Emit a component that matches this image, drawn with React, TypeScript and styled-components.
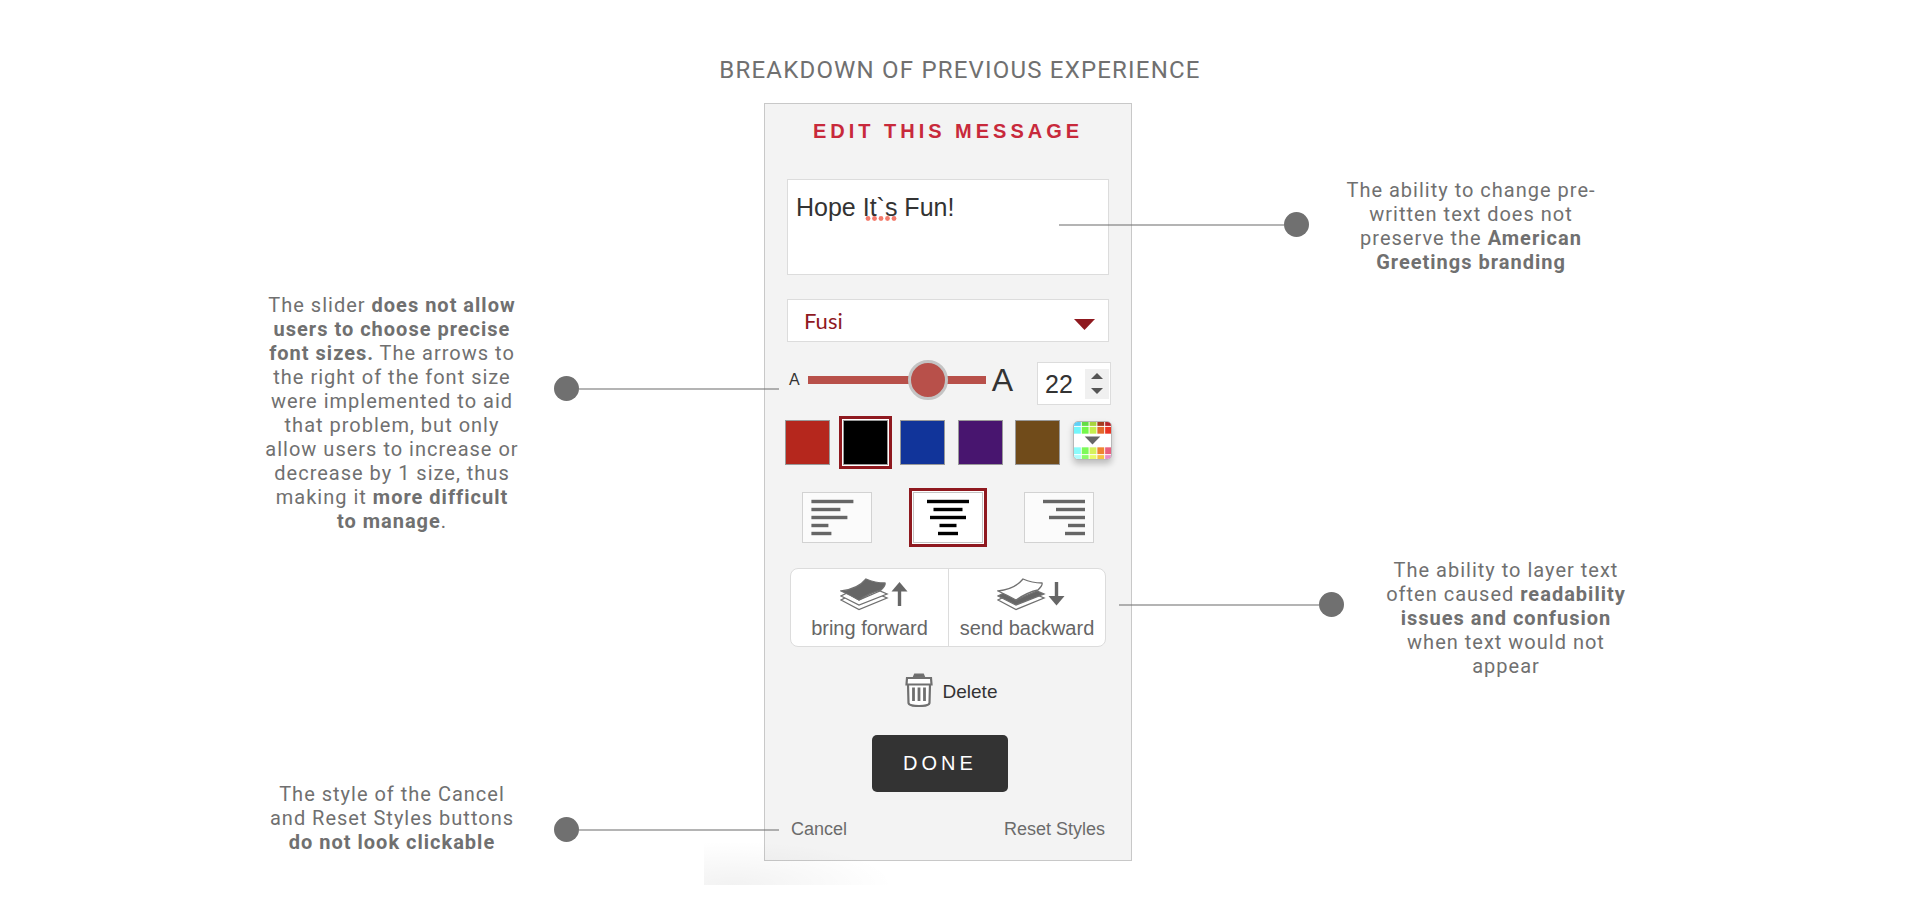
import React from "react";
import styled, { createGlobalStyle, css } from "styled-components";

const Global = createGlobalStyle`
  *, *::before, *::after { box-sizing: border-box; }
  body { margin: 0; background: #fff; color: #707070; font-family: Roboto, sans-serif; }
  button, input, select, textarea { font: inherit; color: inherit; margin: 0; padding: 0; border: 0; border-radius: 0; }
  button { cursor: pointer; background: none; }
`;

const RED = "#8f191f";
const INK = "#333";

const Page = styled.main`
  display: flex;
  flex-direction: column;
  align-items: center;
  padding: 54px 0 38px;
`;
const Title = styled.h1`
  margin: 0 0 17px;
  font-size: 24px;
  line-height: 32px;
  font-weight: 400;
  letter-spacing: 0.05em;
`;
const Stage = styled.div`
  display: grid;
  grid-template-columns: 500px 368px 524px;
  justify-content: center;
`;
const Column = styled.div<{ $top: number; $gap: number; $side: "left" | "right" }>`
  display: flex;
  flex-direction: column;
  align-items: ${(p) => (p.$side === "left" ? "flex-end" : "flex-start")};
  gap: ${(p) => p.$gap}px;
  padding-top: ${(p) => p.$top}px;
`;
const CalloutRow = styled.div<{ $side: "left" | "right"; $overlap: number }>`
  position: relative;
  z-index: 2;
  display: flex;
  flex-direction: ${(p) => (p.$side === "left" ? "row" : "row-reverse")};
  gap: 34px;
  ${(p) => (p.$side === "left" ? "margin-right" : "margin-left")}: -${(p) => p.$overlap}px;
  pointer-events: none;
`;
const Note = styled.p`
  width: 256px;
  margin: 0;
  font-size: 20px;
  line-height: 24px;
  letter-spacing: 0.05em;
  text-align: center;
`;
const Connector = styled.div<{ $side: "left" | "right"; $length: number; $drop: number }>`
  display: flex;
  flex-direction: ${(p) => (p.$side === "left" ? "row" : "row-reverse")};
  align-items: center;
  width: ${(p) => p.$length}px;
  height: 25px;
  margin-top: ${(p) => p.$drop}px;
`;
const Dot = styled.span`
  width: 25px;
  height: 25px;
  border-radius: 50%;
  background: #707070;
`;
const Line = styled.span`
  flex: 1;
  height: 2px;
  background: rgba(112, 112, 112, 0.52);
`;

type CalloutProps = {
  side: "left" | "right";
  overlap: number;
  length: number;
  drop: number;
  children: React.ReactNode;
};
const Callout = ({ side, overlap, length, drop, children }: CalloutProps) => (
  <CalloutRow $side={side} $overlap={overlap}>
    <Note>{children}</Note>
    <Connector $side={side} $length={length} $drop={drop}>
      <Dot />
      <Line />
    </Connector>
  </CalloutRow>
);

const Panel = styled.form`
  position: relative;
  display: flex;
  flex-direction: column;
  padding: 11px 20px 19px;
  border: 1px solid #c8c8c8;
  background: #f3f3f3;
  font-family: "Liberation Sans", Arial, sans-serif;
  color: ${INK};
`;
const Smudge = styled.div`
  position: absolute;
  left: -61px;
  bottom: -25px;
  width: 200px;
  height: 44px;
  background: radial-gradient(ellipse 160px 44px at 30px 44px, rgba(0, 0, 0, 0.05), transparent);
  pointer-events: none;
`;
const PanelTitle = styled.h2`
  margin: 0;
  font-size: 20px;
  line-height: 32px;
  letter-spacing: 4px;
  font-weight: 700;
  text-align: center;
  color: #c8293b;
`;
const MessageWrap = styled.label`
  position: relative;
  display: flex;
  margin: 32px 2px 0;
`;
const Message = styled.textarea`
  width: 100%;
  height: 96px;
  padding: 12px 8px;
  border: 1px solid #dcdcdc;
  background: #fff;
  font-size: 25px;
  line-height: 30px;
  resize: none;
  outline: none;
`;
const SpellMark = styled.svg`
  position: absolute;
  left: 78px;
  top: 37px;
`;
const SelectWrap = styled.label`
  position: relative;
  display: flex;
  margin: 24px 2px 0;
`;
const FontSelect = styled.select`
  width: 100%;
  height: 43px;
  padding: 0 16px;
  border: 1px solid #dcdcdc;
  background: #fff;
  appearance: none;
  font-family: Lato, sans-serif;
  font-size: 22px;
  color: ${RED};
`;
const SelectCaret = styled.svg`
  position: absolute;
  right: 14px;
  top: 20px;
  pointer-events: none;
`;
const SizeRow = styled.div`
  display: flex;
  align-items: center;
  height: 43px;
  margin: 20px 0 0 4px;
`;
const Letter = styled.span<{ $big?: boolean }>`
  padding-bottom: 8px;
  font-size: ${(p) => (p.$big ? 32 : 16)}px;
  line-height: 32px;
`;
const Slider = styled.input`
  flex: 1;
  min-width: 0;
  height: 40px;
  margin: 0 6px 7px 8px;
  appearance: none;
  background: linear-gradient(#b8504a, #b8504a) center / 100% 8px no-repeat;
  &::-webkit-slider-thumb {
    appearance: none;
    width: 40px;
    height: 40px;
    border: 3px solid #c4c4c4;
    border-radius: 50%;
    background: #b8504a;
  }
`;
const NumberBox = styled.div`
  display: flex;
  align-items: center;
  width: 74px;
  height: 43px;
  margin-left: 24px;
  padding: 0 1px 0 7px;
  border: 1px solid #dcdcdc;
  background: #fff;
`;
const NumberInput = styled.input`
  flex: 1;
  min-width: 0;
  background: none;
  font-size: 25px;
  line-height: 30px;
`;
const Spinner = styled.div`
  display: flex;
  flex-direction: column;
  width: 24px;
  background: #f0f0f0;
`;
const SpinButton = styled.button`
  display: flex;
  align-items: center;
  justify-content: center;
  height: 15px;
`;
const ring = css`
  outline: 3px solid ${RED};
  outline-offset: 1px;
  box-shadow: 0 0 0 1px #fff;
`;
const SwatchRow = styled.div`
  display: flex;
  justify-content: space-between;
  margin: 15px -1px 0 0;
`;
const Swatch = styled.button<{ $color: string; $on?: boolean }>`
  width: 45px;
  height: 45px;
  border: 1px solid #999;
  background: ${(p) => p.$color};
  ${(p) => p.$on && ring}
`;
const PickerButton = styled.button`
  display: flex;
  width: 39px;
  height: 39px;
  margin-top: 1px;
  overflow: hidden;
  border: 1px solid #b8b8b8;
  border-radius: 5px;
  background: #fff;
  box-shadow: 0 4px 6px rgba(0, 0, 0, 0.22);
`;
const AlignRow = styled.div`
  display: flex;
  justify-content: space-between;
  margin: 27px 17px 0;
`;
const AlignButton = styled.button<{ $on?: boolean }>`
  display: flex;
  width: 70px;
  height: 51px;
  border: 1px solid ${(p) => (p.$on ? "#c4c4c4" : "#d2d2d2")};
  background: ${(p) => (p.$on ? "#fff" : "#fbfbfb")};
  color: ${(p) => (p.$on ? "#000" : "#666")};
  ${(p) => p.$on && ring}
`;
const LayerGroup = styled.div`
  display: grid;
  grid-template-columns: 157px 1fr;
  height: 79px;
  margin: 25px 5px 0;
  border: 1px solid #dcdcdc;
  border-radius: 8px;
  background: #fff;
`;
const LayerButton = styled.button`
  display: flex;
  flex-direction: column;
  align-items: center;
  padding-top: 9px;
  font-size: 20px;
  line-height: 24px;
  white-space: nowrap;
  color: #666;
  & + & {
    border-left: 1px solid #dcdcdc;
  }
  svg {
    margin: 0 0 4px 8px;
  }
`;
const DeleteButton = styled.button`
  display: flex;
  align-self: center;
  align-items: center;
  gap: 10px;
  margin: 26px 0 0 6px;
  font-size: 19px;
  line-height: 24px;
  svg {
    margin-bottom: 4px;
  }
`;
const DoneButton = styled.button`
  align-self: center;
  width: 136px;
  height: 57px;
  margin: 24px 16px 0 0;
  border-radius: 5px;
  background: ${INK};
  color: #fff;
  font-size: 20px;
  letter-spacing: 4px;
`;
const Footer = styled.div`
  display: flex;
  justify-content: space-between;
  margin: 25px 6px 0;
`;
const QuietButton = styled.button`
  font-size: 18px;
  line-height: 24px;
  color: #6b6b6b;
`;

const swatches = [
  { name: "Red", color: "#b5271d" },
  { name: "Black", color: "#000", on: true },
  { name: "Blue", color: "#11349a" },
  { name: "Purple", color: "#48156f" },
  { name: "Brown", color: "#704b1a" },
];

const lineWidths = [42, 29, 36, 17, 20];
type Align = "left" | "center" | "right";
const lineStart = (align: Align, w: number) =>
  align === "left" ? 8.4 : align === "right" ? 60 - w : 34 - w / 2;
const AlignIcon = ({ align }: { align: Align }) => (
  <svg width="68" height="49" viewBox="0 0 68 49" fill="currentColor">
    {lineWidths.map((w, i) => (
      <rect key={i} x={lineStart(align, w)} y={6.8 + i * 8} width={w} height="3.4" />
    ))}
  </svg>
);

const LayersIcon = ({ down }: { down?: boolean }) => (
  <svg width="68" height="34" viewBox="0 0 68 34" fill="#fff" stroke="#707070" strokeWidth="1.3">
    <path d="M1 22 19 31.500 47 20 40 17 19 25 7 19Z" />
    <path d="M1 18 19 27 47 16 40 13 19 22 7 15Z" fill={down ? "#666" : "#fff"} />
    <path d="M1 13Q18 11 26 1Q35 5 45 5Q46 7 41 12Q31 14 19 22Q10 17 1 13Z" fill={down ? "#fff" : "#666"} />
    <path d={down ? "M59.500 4V21" : "M59.500 11V28"} stroke="#666" strokeWidth="3.4" />
    <path d={down ? "M51.500 18H67.500L59.500 27.500Z" : "M51.500 13.500H67.500L59.500 4Z"} fill="#666" stroke="none" />
  </svg>
);

const TrashIcon = () => (
  <svg width="28" height="34" viewBox="0 0 28 34" fill="#fff" stroke="#707070" strokeWidth="2.2">
    <path d="M3 11 3.500 30Q4 33 14 33T24.500 30L25 11Z" />
    <path d="M9 4 10 1.500H18L19 4Z" fill="#666" />
    <path d="M2 5H26L26.500 11.500H1.500Z" />
    <path d="M8.500 14.500V28M14 14.500V28M19.500 14.500V28" strokeWidth="2.8" />
  </svg>
);

const pickerRows = [
  { y: 0, h: 4, colors: ["#5fd0f5", "#64dd45", "#a8d43c", "#a63a1e", "#b5232a"] },
  { y: 5, h: 7, colors: ["#72f6fb", "#74f84a", "#c5ee4d", "#e2682b", "#ea3323"] },
  { y: 26, h: 7, colors: ["#8bfbfb", "#7dfa5a", "#d5f25c", "#ef8532", "#ea5f7e"] },
  { y: 34, h: 4, colors: ["#b0fbfb", "#8cfb6a", "#e8fb6a", "#f5c242", "#e88cc8"] },
];
const pickerCols = [
  [0, 7],
  [8, 7],
  [16, 7],
  [24, 7],
  [32, 6],
];
const PickerIcon = () => (
  <svg width="37" height="37" viewBox="0 0 38 38">
    {pickerRows.map((row) =>
      row.colors.map((c, i) => (
        <rect key={c} x={pickerCols[i][0]} y={row.y} width={pickerCols[i][1]} height={row.h} fill={c} />
      )),
    )}
    <path d="M11 15H27L19 23Z" fill="#666" />
  </svg>
);

export default function App() {
  return (
    <Page>
      <Global />
      <Title>BREAKDOWN OF PREVIOUS EXPERIENCE</Title>
      <Stage>
        <Column $side="left" $top={190} $gap={249}>
          <Callout side="left" overlap={15} length={225} drop={83}>
            The slider <b>does not allow users to choose precise font sizes.</b> The arrows to the right of the font
            size were implemented to aid that problem, but only allow users to increase or decrease by 1 size, thus
            making it <b>more difficult to manage</b>.
          </Callout>
          <Callout side="left" overlap={15} length={225} drop={35}>
            The style of the Cancel and Reset Styles buttons <b>do not look clickable</b>
          </Callout>
        </Column>

        <Panel onSubmit={(e) => e.preventDefault()}>
          <PanelTitle>EDIT THIS MESSAGE</PanelTitle>
          <MessageWrap>
            <Message aria-label="Message" spellCheck={false} defaultValue="Hope It`s Fun!" />
            <SpellMark width="33" height="5" viewBox="0 0 33 5" fill="#f37b6b">
              {[0, 1, 2, 3, 4].map((i) => (
                <circle key={i} cx={3 + i * 6.5} cy="2.5" r="2.4" />
              ))}
            </SpellMark>
          </MessageWrap>
          <SelectWrap>
            <FontSelect aria-label="Font" defaultValue="Fusi">
              <option>Fusi</option>
            </FontSelect>
            <SelectCaret width="21" height="11" viewBox="0 0 21 11" fill={RED}>
              <path d="M0 0H21L10.500 11Z" />
            </SelectCaret>
          </SelectWrap>
          <SizeRow>
            <Letter>A</Letter>
            <Slider type="range" aria-label="Font size" min={0} max={40} defaultValue={29} />
            <Letter $big>A</Letter>
            <NumberBox>
              <NumberInput aria-label="Font size value" inputMode="numeric" defaultValue="22" />
              <Spinner>
                <SpinButton type="button" aria-label="Increase size">
                  <svg width="12" height="6" viewBox="0 0 12 6" fill="#555">
                    <path d="M0 6H12L6 0Z" />
                  </svg>
                </SpinButton>
                <SpinButton type="button" aria-label="Decrease size">
                  <svg width="12" height="6" viewBox="0 0 12 6" fill="#555">
                    <path d="M0 0H12L6 6Z" />
                  </svg>
                </SpinButton>
              </Spinner>
            </NumberBox>
          </SizeRow>
          <SwatchRow>
            {swatches.map((s) => (
              <Swatch key={s.name} type="button" aria-label={s.name} $color={s.color} $on={s.on} />
            ))}
            <PickerButton type="button" aria-label="More colors">
              <PickerIcon />
            </PickerButton>
          </SwatchRow>
          <AlignRow>
            <AlignButton type="button" aria-label="Align left">
              <AlignIcon align="left" />
            </AlignButton>
            <AlignButton type="button" aria-label="Align center" $on>
              <AlignIcon align="center" />
            </AlignButton>
            <AlignButton type="button" aria-label="Align right">
              <AlignIcon align="right" />
            </AlignButton>
          </AlignRow>
          <LayerGroup>
            <LayerButton type="button">
              <LayersIcon />
              bring forward
            </LayerButton>
            <LayerButton type="button">
              <LayersIcon down />
              send backward
            </LayerButton>
          </LayerGroup>
          <DeleteButton type="button">
            <TrashIcon />
            Delete
          </DeleteButton>
          <DoneButton type="submit">DONE</DoneButton>
          <Footer>
            <QuietButton type="button">Cancel</QuietButton>
            <QuietButton type="button">Reset Styles</QuietButton>
          </Footer>
          <Smudge />
        </Panel>

        <Column $side="right" $top={75} $gap={284}>
          <Callout side="right" overlap={73} length={250} drop={34}>
            The ability to change pre-written text does not preserve the <b>American Greetings branding</b>
          </Callout>
          <Callout side="right" overlap={13} length={225} drop={34}>
            The ability to layer text often caused <b>readability issues and confusion</b> when text would not appear
          </Callout>
        </Column>
      </Stage>
    </Page>
  );
}
